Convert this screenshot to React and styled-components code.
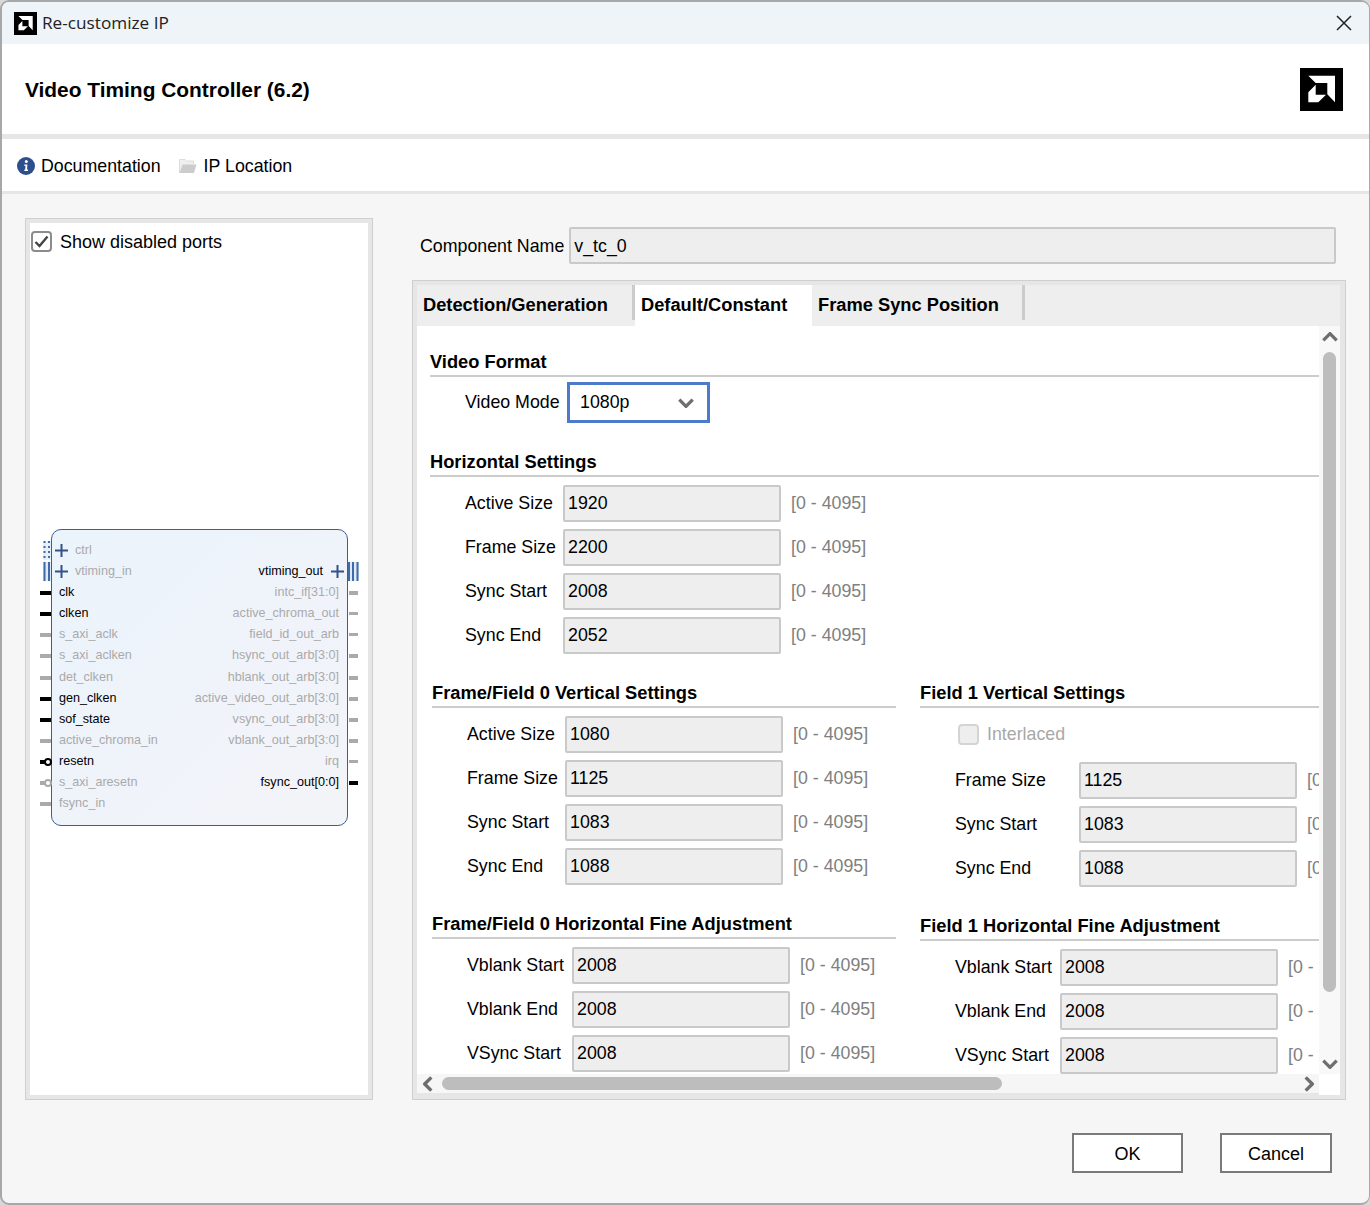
import React from "react";
import styled, { createGlobalStyle } from "styled-components";

const Global = createGlobalStyle`
  html, body { margin: 0; padding: 0; background: #d9d9d9; }
  * { box-sizing: border-box; }
`;
const FONT = `"Liberation Sans", Arial, sans-serif`;

const Dialog = styled.div`
  width: 1370px; height: 1205px; display: flex; flex-direction: column; overflow: hidden;
  border: 2px solid #a8a8a8; border-right-width: 1.5px; border-radius: 9px; background: #f6f6f6;
  font-family: ${FONT}; font-size: 18px; color: #000;
`;
const TitleBar = styled.div`
  height: 42px; flex: none; background: #eff4f9; display: flex; align-items: center; padding: 0 17px 0 12px;
`;
const TitleText = styled.span`
  font-family: "Open Sans", sans-serif; font-size: 17.2px; margin-left: 5px; flex: 1; color: #222; position: relative; top: -1px;
`;
const Header = styled.div`
  height: 95px; flex: none; background: #fff; border-bottom: 5px solid #e6e6e6; display: flex; align-items: center;
  justify-content: space-between; padding: 0 26px 0 23px;
`;
const HeaderTitle = styled.h1`
  margin: 2px 0 0; font-size: 20.9px; font-weight: 700;
`;
const LinkBar = styled.div`
  height: 55px; flex: none; background: #fff; border-bottom: 3px solid #e6e6e6; display: flex; align-items: center; padding: 2px 0 0 15px;
`;
const LinkItem = styled.span`
  display: flex; align-items: center; gap: ${p => p.$gap}px; margin-right: 18px; font-size: 17.8px;
`;
const Main = styled.div`
  height: 906px; flex: none; display: flex; padding: 24px 23px 0 23px; gap: 39px;
`;
const LeftPanel = styled.div`
  width: 348px; height: 882px; flex: none; border: 1px solid #cfcfcf; background: #fff; box-shadow: inset 0 0 0 4px #e6e6e6;
  padding: 12px 0 0 5px;
`;
const ShowRow = styled.label`
  display: flex; align-items: center; gap: 8px; height: 21px; font-size: 18px; line-height: 23px;
`;
const ShowText = styled.span`
  padding-top: 1px;
`;
const CheckBox = styled.span`
  width: 21px; height: 21px; border-radius: 4px; display: flex; align-items: center; justify-content: center; flex: none;
  border: 2px solid ${p => (p.$disabled ? "#d4d4d4" : "#8c8c8c")};
  background: ${p => (p.$disabled ? "#eeeeee" : "#fff")};
`;
const Symbol = styled.div`
  position: relative; width: 297px; height: 297px; margin: 277px 0 0 20px; padding: 10px 0 0; border: 1.5px solid #3f5c96; border-radius: 10px;
  background: linear-gradient(135deg, #ebf3fc 0%, #f3f4f8 100%);
  font-size: 12.6px; line-height: 21.1px;
`;
const PortRow = styled.div`
  position: relative; height: 21.1px; display: flex; justify-content: space-between; padding: 0 8px 0 7px;
`;
const PortName = styled.span`
  display: flex; align-items: center; gap: 7px;
  color: ${p => (p.$on ? "#000" : "#aaa")};
`;
const PlusSlot = styled.span`
  display: flex; ${p => (p.$right ? "margin: 0 -5px 0 1px;" : "margin-left: -4px;")}
`;
const Wire = styled.span`
  position: absolute; top: 9px; height: ${p => (p.$thin ? 3 : 4)}px;
  background: ${p => (p.$on ? "#000" : "#aaa")};
  ${p => (p.$right ? "right: -11px; width: 9px;" : "left: -12px; width: 11px;")}
`;
const Bubble = styled.span`
  position: absolute; left: -8px; top: 7px; width: 8px; height: 8px; border-radius: 50%; background: #fff;
  border: 2px solid ${p => (p.$on ? "#000" : "#aaa")};
`;
const BusPin = styled.svg`
  position: absolute; top: 1px; display: block; ${p => (p.$right ? "right: -12px;" : "left: -9px;")}
`;
const RightCol = styled.div`
  flex: 1; min-width: 0; display: flex; flex-direction: column;
`;
const NameRow = styled.div`
  display: flex; align-items: center; gap: 5px; margin: 9px 10px 17px 8px; height: 36px; font-size: 17.8px; line-height: 22px;
`;
const NameLabel = styled.span`
  padding-top: 1px;
`;
const NameInput = styled.div`
  flex: 1; height: 37px; display: flex; align-items: center; padding: 1px 0 0 3px; background: #eeeeee; border: 2px solid #c9c9c9; border-radius: 2px;
`;
const TabPanel = styled.div`
  height: 820px; border: 1px solid #cfcfcf; background: #e6e6e6; padding: 4px; display: grid;
  grid-template-columns: 902px 21px; grid-template-rows: 41px 748px 21px;
`;
const TabStrip = styled.div`
  grid-column: 1 / 3; background: #eeeeee; display: flex;
`;
const Tab = styled.div`
  position: relative; width: ${p => p.$w}px; flex: none; padding: 9px 0 0 6px; font-weight: 700; font-size: 18.3px;
  background: ${p => (p.$active ? "#fff" : "transparent")};
  ${p => p.$sep && `&::after { content: ""; position: absolute; right: 0; top: 0; width: 3px; height: 35px; background: #cccccc; }`}
`;
const Clip = styled.div`
  overflow: hidden; background: #fff; padding: 23px 0 0 13px; font-size: 17.8px;
`;
const SectionHead = styled.div`
  height: 28px; line-height: 26px; font-weight: 700; font-size: 18.3px; border-bottom: 2px solid #cccccc;
  margin-bottom: ${p => p.$mb ?? 8}px;
`;
const Rows = styled.div`
  display: flex; flex-direction: column; gap: 7px; padding-left: 35px;
`;
const FieldRow = styled.div`
  display: flex; align-items: center; height: ${p => p.$h ?? 37}px; white-space: nowrap;
`;
const FieldLabel = styled.span`
  width: ${p => p.$w}px; flex: none;
`;
const ValueBox = styled.div`
  width: 218px; height: 37px; flex: none; display: flex; align-items: center; padding-left: 3px; background: #eeeeee;
  border: 2px solid #c9c9c9; border-radius: 2px;
`;
const RangeText = styled.span`
  margin-left: 10px; color: #808080;
`;
const SelectBox = styled.div`
  width: 143px; height: 41px; border: 3px solid #4b7bc9; background: #fff; display: flex; align-items: center;
  justify-content: space-between; padding: 0 13px 0 10px;
`;
const FormatBlock = styled.div`
  margin-bottom: 26px;
`;
const HorizontalBlock = styled.div`
  margin-bottom: 26px;
`;
const Pair = styled.div`
  display: grid; grid-template-columns: 464px 399px; column-gap: 24px; margin-left: 2px;
`;
const PairCol = styled.div`
  display: flex; flex-direction: column;
`;
const SubSection = styled.div`
  margin-top: ${p => p.$mt ?? 0}px;
`;
const InterlaceRow = styled.div`
  display: flex; align-items: center; gap: 8px; height: 21px; margin: 16px 0 17px 38px; color: #a8a8a8;
`;
const VScroll = styled.div`
  background: #f8f8f8; display: flex; flex-direction: column; align-items: center; width: 21px;
`;
const ArrowBox = styled.div`
  height: ${p => p.$h}px; flex: none; display: flex; align-items: center; justify-content: center;
`;
const VThumb = styled.div`
  width: 13px; height: 640px; flex: none; margin: 4px 0 auto; border-radius: 6.5px; background: #bdbdbd;
`;
const Corner = styled.div`
  background: #fff; width: 21px;
`;
const HScroll = styled.div`
  background: #f6f6f6; display: flex; align-items: center; height: 19px; padding-left: 6px;
`;
const HThumb = styled.div`
  width: 560px; height: 13px; margin: 0 auto 0 9px; border-radius: 7px; background: #bdbdbd;
`;
const HEnd = styled.div`
  padding-right: 5px; display: flex;
`;
const Footer = styled.div`
  flex: 1; display: flex; justify-content: flex-end; gap: 37px; padding: 33px 37px 0 0;
`;
const Btn = styled.button`
  width: ${p => p.$w}px; height: 40px; background: #fff; border: 2px solid #7a7a7a; font: 18px ${FONT}; color: #000; padding: 2px 0 0;
`;
const IconSvg = styled.svg`
  display: block; flex: none;
`;

const Logo = ({ size }) => (
  <IconSvg width={size} height={size} viewBox="0 0 43 43">
    <rect width="43" height="43" fill="#000" />
    <polygon fill="#fff" points="8.3,7.7 35,7.7 35,34.3 27.3,26.3 27.3,15 15.7,15" />
    <polygon fill="#fff" points="8.3,24.3 15.7,16.7 15.7,26.7 26,26.7 18.3,34.3 8.3,34.3" />
  </IconSvg>
);
const Close = () => (
  <IconSvg width="16" height="16" viewBox="0 0 16 16">
    <path d="M1 1 L15 15 M15 1 L1 15" stroke="#222" strokeWidth="1.5" fill="none" />
  </IconSvg>
);
const Info = () => (
  <IconSvg width="18" height="18" viewBox="0 0 18 18">
    <circle cx="9" cy="9" r="9" fill="#2f4f8c" />
    <circle cx="9.3" cy="4.6" r="1.5" fill="#fff" />
    <path d="M7.2 7.4 H10.4 L10 12.6 H11 V14 H7.4 V12.6 H8.2 L8.5 8.7 H7.2 Z" fill="#fff" />
  </IconSvg>
);
const Folder = () => (
  <IconSvg width="18" height="15" viewBox="0 0 18 15">
    <path d="M0.5 14 V0.5 H6 L7.5 2 H14.5 V5" stroke="#dcdcdc" strokeWidth="1" fill="#efefef" />
    <path d="M0.5 14 L3.5 5.5 H17.5 L15 14 Z" fill="#cccccc" />
  </IconSvg>
);
const Check = () => (
  <IconSvg width="15" height="13" viewBox="0 0 15 13">
    <path d="M1.5 7 L5.5 11 L13.5 1.5" stroke="#444" strokeWidth="2.4" fill="none" />
  </IconSvg>
);
const Chevron = ({ dir, size = 16, color = "#6e6e6e" }) => {
  const d = {
    down: "M1 1.5 L7 7.5 L13 1.5",
    up: "M1 7.5 L7 1.5 L13 7.5",
    left: "M7.5 1 L1.5 7 L7.5 13",
    right: "M1.5 1 L7.5 7 L1.5 13",
  }[dir];
  const vert = dir === "up" || dir === "down";
  const minor = Math.round((size * 9) / 14);
  return (
    <IconSvg width={vert ? size : minor} height={vert ? minor : size} viewBox={vert ? "0 0 14 9" : "0 0 9 14"}>
      <path d={d} stroke={color} strokeWidth="3" fill="none" />
    </IconSvg>
  );
};
const Plus = () => (
  <IconSvg width="13" height="13" viewBox="0 0 13 13">
    <path d="M0 6.5 H13 M6.5 0 V13" stroke="#33528c" strokeWidth="2" />
  </IconSvg>
);
const BusBars = ({ side }) =>
  side === "right" ? (
    <BusPin $right width="11" height="19" viewBox="0 0 11 19">
      <rect width="11" height="19" fill="#dfeaf6" />
      <path d="M1 0 V19 M5 0 V19 M9.5 0 V19" stroke="#3f6ba8" strokeWidth="2" />
    </BusPin>
  ) : (
    <BusPin width="8" height="19" viewBox="0 0 8 19">
      <rect width="8" height="19" fill="#dfeaf6" />
      <path d="M1.5 0 V19 M6 0 V19" stroke="#3f6ba8" strokeWidth="2" />
    </BusPin>
  );
const DotPin = () => (
  <BusPin width="8" height="19" viewBox="0 0 8 19">
    <rect width="8" height="19" fill="#e6eef8" />
    <path d="M1.5 0 V19 M6 0 V19" stroke="#3f6ba8" strokeWidth="2" strokeDasharray="2 3" />
  </BusPin>
);

const ports = [
  { l: "ctrl", lk: "dot", r: null },
  { l: "vtiming_in", lk: "bus", r: "vtiming_out", rOn: true, rk: "bus" },
  { l: "clk", lOn: true, r: "intc_if[31:0]" },
  { l: "clken", lOn: true, r: "active_chroma_out", rThin: true },
  { l: "s_axi_aclk", r: "field_id_out_arb", rThin: true },
  { l: "s_axi_aclken", r: "hsync_out_arb[3:0]" },
  { l: "det_clken", r: "hblank_out_arb[3:0]" },
  { l: "gen_clken", lOn: true, r: "active_video_out_arb[3:0]" },
  { l: "sof_state", lOn: true, r: "vsync_out_arb[3:0]" },
  { l: "active_chroma_in", r: "vblank_out_arb[3:0]" },
  { l: "resetn", lOn: true, bub: true, r: "irq", rThin: true },
  { l: "s_axi_aresetn", bub: true, r: "fsync_out[0:0]", rOn: true },
  { l: "fsync_in", r: null },
];

const Port = ({ p }) => (
  <PortRow>
    {p.lk === "dot" ? <DotPin /> : p.lk === "bus" ? <BusBars side="left" /> : <Wire $on={p.lOn} />}
    {p.bub && <Bubble $on={p.lOn} />}
    <PortName $on={p.lOn}>
      {p.lk && <PlusSlot><Plus /></PlusSlot>}
      {p.l}
    </PortName>
    {p.r && (
      <PortName $on={p.rOn}>
        {p.r}
        {p.rk && <PlusSlot $right><Plus /></PlusSlot>}
      </PortName>
    )}
    {p.r && (p.rk ? <BusBars side="right" /> : <Wire $right $on={p.rOn} $thin={p.rThin} />)}
  </PortRow>
);

const Field = ({ label, value, w }) => (
  <FieldRow>
    <FieldLabel $w={w}>{label}</FieldLabel>
    <ValueBox>{value}</ValueBox>
    <RangeText>[0 - 4095]</RangeText>
  </FieldRow>
);
const FieldList = ({ items, w }) => (
  <Rows>
    {items.map(([label, value]) => (
      <Field key={label} label={label} value={value} w={w} />
    ))}
  </Rows>
);

const horizontal = [["Active Size", "1920"], ["Frame Size", "2200"], ["Sync Start", "2008"], ["Sync End", "2052"]];
const vert0 = [["Active Size", "1080"], ["Frame Size", "1125"], ["Sync Start", "1083"], ["Sync End", "1088"]];
const vert1 = [["Frame Size", "1125"], ["Sync Start", "1083"], ["Sync End", "1088"]];
const fine = [["Vblank Start", "2008"], ["Vblank End", "2008"], ["VSync Start", "2008"]];

export default function App() {
  return (
    <>
      <Global />
      <Dialog>
        <TitleBar>
          <Logo size={23} />
          <TitleText>Re-customize IP</TitleText>
          <Close />
        </TitleBar>
        <Header>
          <HeaderTitle>Video Timing Controller (6.2)</HeaderTitle>
          <Logo size={43} />
        </Header>
        <LinkBar>
          <LinkItem $gap={6}><Info />Documentation</LinkItem>
          <LinkItem $gap={7}><Folder />IP Location</LinkItem>
        </LinkBar>
        <Main>
          <LeftPanel>
            <ShowRow>
              <CheckBox><Check /></CheckBox>
              <ShowText>Show disabled ports</ShowText>
            </ShowRow>
            <Symbol>
              {ports.map(p => <Port key={p.l} p={p} />)}
            </Symbol>
          </LeftPanel>
          <RightCol>
            <NameRow>
              <NameLabel>Component Name</NameLabel>
              <NameInput>v_tc_0</NameInput>
            </NameRow>
            <TabPanel>
              <TabStrip>
                <Tab $w={218} $sep>Detection/Generation</Tab>
                <Tab $w={177} $active>Default/Constant</Tab>
                <Tab $w={213} $sep>Frame Sync Position</Tab>
              </TabStrip>
              <Clip>
                <FormatBlock>
                  <SectionHead $mb={5}>Video Format</SectionHead>
                  <Rows>
                    <FieldRow $h={41}>
                      <FieldLabel $w={102}>Video Mode</FieldLabel>
                      <SelectBox>1080p<Chevron dir="down" /></SelectBox>
                    </FieldRow>
                  </Rows>
                </FormatBlock>
                <HorizontalBlock>
                  <SectionHead>Horizontal Settings</SectionHead>
                  <FieldList items={horizontal} w={98} />
                </HorizontalBlock>
                <Pair>
                  <PairCol>
                    <SectionHead>Frame/Field 0 Vertical Settings</SectionHead>
                    <FieldList items={vert0} w={98} />
                    <SubSection $mt={26}>
                      <SectionHead>Frame/Field 0 Horizontal Fine Adjustment</SectionHead>
                      <FieldList items={fine} w={105} />
                    </SubSection>
                  </PairCol>
                  <PairCol>
                    <SectionHead $mb={0}>Field 1 Vertical Settings</SectionHead>
                    <InterlaceRow><CheckBox $disabled />Interlaced</InterlaceRow>
                    <FieldList items={vert1} w={124} />
                    <SubSection $mt={26}>
                      <SectionHead>Field 1 Horizontal Fine Adjustment</SectionHead>
                      <FieldList items={fine} w={105} />
                    </SubSection>
                  </PairCol>
                </Pair>
              </Clip>
              <VScroll>
                <ArrowBox $h={22}><Chevron dir="up" /></ArrowBox>
                <VThumb />
                <ArrowBox $h={20}><Chevron dir="down" /></ArrowBox>
              </VScroll>
              <HScroll>
                <Chevron dir="left" />
                <HThumb />
                <HEnd><Chevron dir="right" /></HEnd>
              </HScroll>
              <Corner />
            </TabPanel>
          </RightCol>
        </Main>
        <Footer>
          <Btn $w={111}>OK</Btn>
          <Btn $w={112}>Cancel</Btn>
        </Footer>
      </Dialog>
    </>
  );
}
